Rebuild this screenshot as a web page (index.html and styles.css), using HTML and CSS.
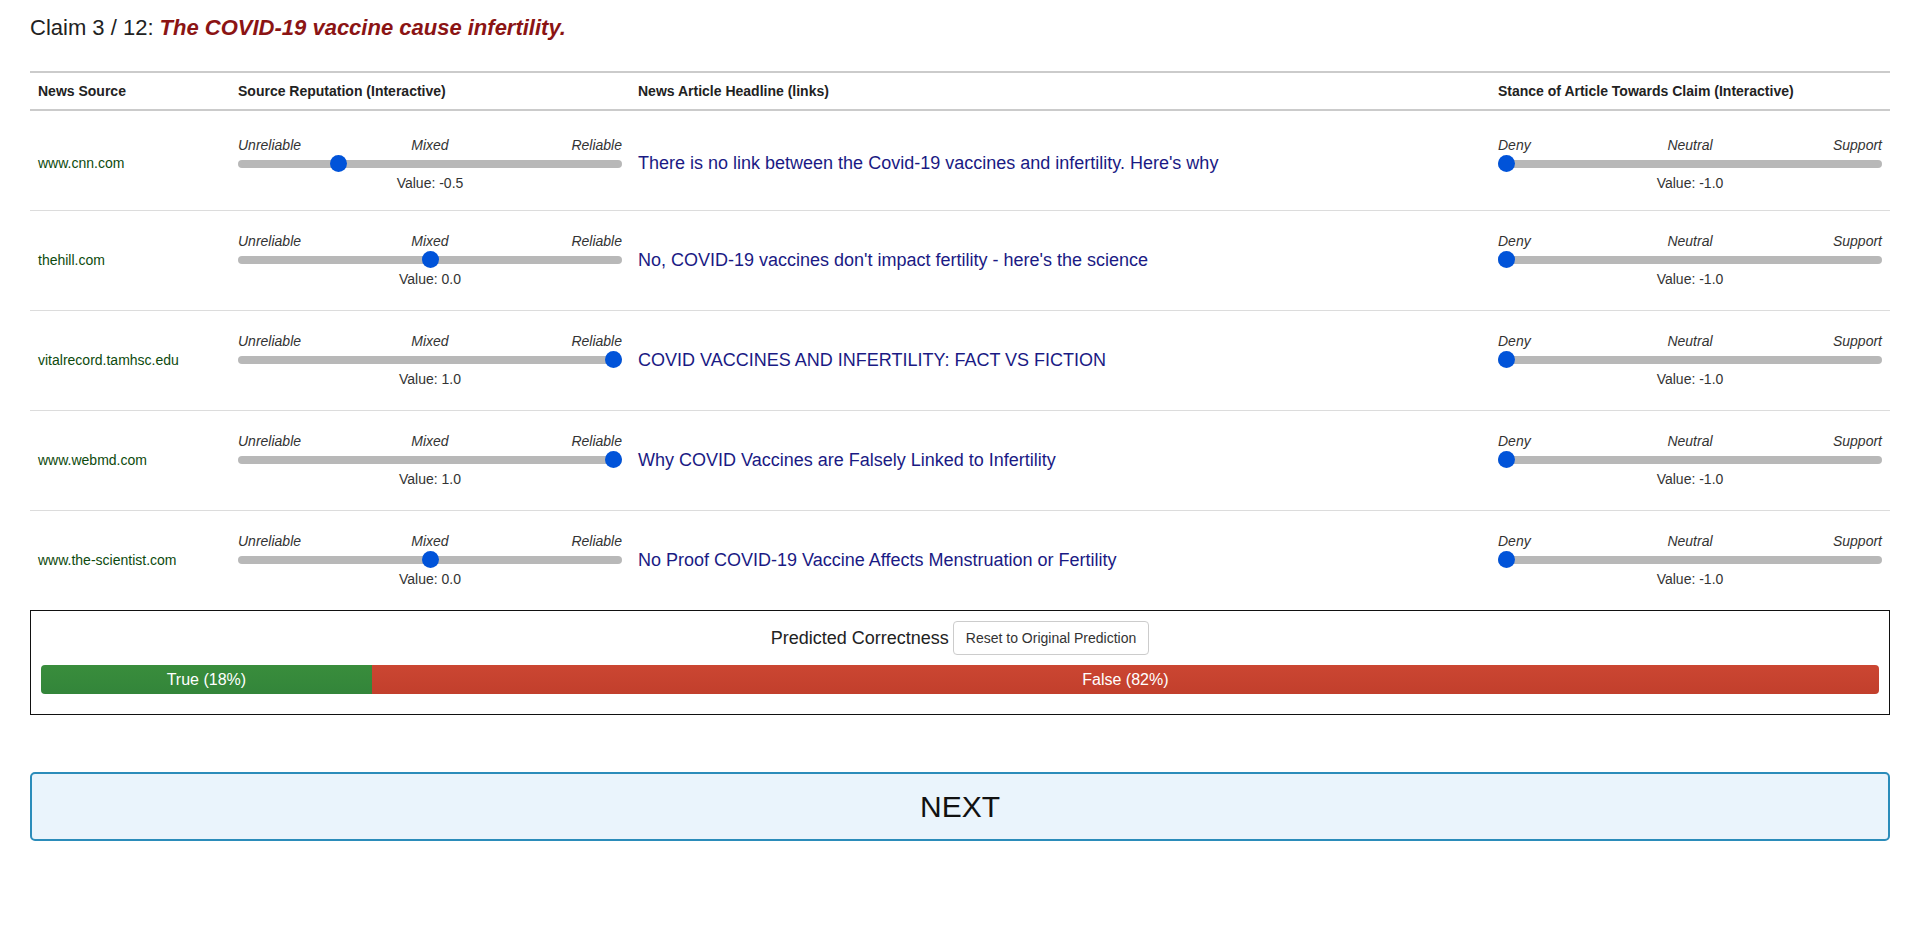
FILE: index.html
```html
<!DOCTYPE html>
<html lang="en">
<head>
<meta charset="utf-8">
<title>Claim 3 / 12</title>
<link rel="stylesheet" href="styles.css">
</head>
<body>
<div class="page">
  <div class="claim">Claim 3 / 12: <span class="claim-text">The COVID-19 vaccine cause infertility.</span></div>

  <table class="sources">
    <colgroup>
      <col class="c-source">
      <col class="c-rep">
      <col>
      <col class="c-stance">
    </colgroup>
    <thead>
      <tr>
        <th>News Source</th>
        <th>Source Reputation (Interactive)</th>
        <th>News Article Headline (links)</th>
        <th>Stance of Article Towards Claim (Interactive)</th>
      </tr>
    </thead>
    <tbody>
      <tr>
        <td class="src">www.cnn.com</td>
        <td class="slider-cell">
          <div class="scale"><span>Unreliable</span><span>Mixed</span><span>Reliable</span></div>
          <input class="range" type="range" min="-1" max="1" step="0.1" value="-0.5">
          <div class="value">Value: -0.5</div>
        </td>
        <td class="headline"><a href="#">There is no link between the Covid-19 vaccines and infertility. Here's why</a></td>
        <td class="slider-cell">
          <div class="scale"><span>Deny</span><span>Neutral</span><span>Support</span></div>
          <input class="range" type="range" min="-1" max="1" step="0.1" value="-1">
          <div class="value">Value: -1.0</div>
        </td>
      </tr>
      <tr>
        <td class="src">thehill.com</td>
        <td class="slider-cell">
          <div class="scale"><span>Unreliable</span><span>Mixed</span><span>Reliable</span></div>
          <input class="range" type="range" min="-1" max="1" step="0.1" value="0">
          <div class="value">Value: 0.0</div>
        </td>
        <td class="headline"><a href="#">No, COVID-19 vaccines don't impact fertility - here's the science</a></td>
        <td class="slider-cell">
          <div class="scale"><span>Deny</span><span>Neutral</span><span>Support</span></div>
          <input class="range" type="range" min="-1" max="1" step="0.1" value="-1">
          <div class="value">Value: -1.0</div>
        </td>
      </tr>
      <tr>
        <td class="src">vitalrecord.tamhsc.edu</td>
        <td class="slider-cell">
          <div class="scale"><span>Unreliable</span><span>Mixed</span><span>Reliable</span></div>
          <input class="range" type="range" min="-1" max="1" step="0.1" value="1">
          <div class="value">Value: 1.0</div>
        </td>
        <td class="headline"><a href="#">COVID VACCINES AND INFERTILITY: FACT VS FICTION</a></td>
        <td class="slider-cell">
          <div class="scale"><span>Deny</span><span>Neutral</span><span>Support</span></div>
          <input class="range" type="range" min="-1" max="1" step="0.1" value="-1">
          <div class="value">Value: -1.0</div>
        </td>
      </tr>
      <tr>
        <td class="src">www.webmd.com</td>
        <td class="slider-cell">
          <div class="scale"><span>Unreliable</span><span>Mixed</span><span>Reliable</span></div>
          <input class="range" type="range" min="-1" max="1" step="0.1" value="1">
          <div class="value">Value: 1.0</div>
        </td>
        <td class="headline"><a href="#">Why COVID Vaccines are Falsely Linked to Infertility</a></td>
        <td class="slider-cell">
          <div class="scale"><span>Deny</span><span>Neutral</span><span>Support</span></div>
          <input class="range" type="range" min="-1" max="1" step="0.1" value="-1">
          <div class="value">Value: -1.0</div>
        </td>
      </tr>
      <tr>
        <td class="src">www.the-scientist.com</td>
        <td class="slider-cell">
          <div class="scale"><span>Unreliable</span><span>Mixed</span><span>Reliable</span></div>
          <input class="range" type="range" min="-1" max="1" step="0.1" value="0">
          <div class="value">Value: 0.0</div>
        </td>
        <td class="headline"><a href="#">No Proof COVID-19 Vaccine Affects Menstruation or Fertility</a></td>
        <td class="slider-cell">
          <div class="scale"><span>Deny</span><span>Neutral</span><span>Support</span></div>
          <input class="range" type="range" min="-1" max="1" step="0.1" value="-1">
          <div class="value">Value: -1.0</div>
        </td>
      </tr>
    </tbody>
  </table>

  <div class="prediction">
    <div class="pred-head">
      <span class="pred-title">Predicted Correctness</span>
      <button class="btn-reset" type="button">Reset to Original Prediction</button>
    </div>
    <div class="progress">
      <div class="bar bar-true" style="width: 18%">True (18%)</div>
      <div class="bar bar-false" style="width: 82%">False (82%)</div>
    </div>
  </div>

  <button class="next" type="button">NEXT</button>
</div>
</body>
</html>
```

FILE: styles.css
```css
html, body {
  margin: 0;
  padding: 0;
  background: #fff;
}

body {
  font-family: "Liberation Sans", Arial, Helvetica, sans-serif;
  font-size: 14px;
  line-height: 20px;
  color: #333;
}

.page {
  padding: 0 30px;
}

.claim {
  font-size: 22px;
  line-height: 26px;
  color: #222;
  margin: 15px 0 30px;
}

.claim-text {
  color: #8b1414;
  font-weight: bold;
  font-style: italic;
}

.sources {
  width: 100%;
  table-layout: fixed;
  border-collapse: separate;
  border-spacing: 0;
  border-top: 2px solid #cbcbcb;
}

.c-source { width: 200px; }
.c-rep { width: 400px; }
.c-stance { width: 400px; }

.sources th {
  text-align: left;
  font-weight: bold;
  color: #222;
  padding: 8px;
  line-height: 20px;
  border-bottom: 2px solid #cbcbcb;
}

.sources td {
  padding: 0 8px;
  vertical-align: top;
  height: 99px;
  box-sizing: border-box;
}

.sources tbody tr + tr td {
  border-top: 1px solid #dcdcdc;
  height: 100px;
}

.src {
  color: #0d4a0d;
}

.headline a {
  font-size: 18px;
  line-height: 20px;
  color: #1a1a84;
  text-decoration: none;
}

.sources td.src,
.sources td.headline {
  padding-top: 42px;
}

.sources tbody tr + tr td.src,
.sources tbody tr + tr td.headline {
  padding-top: 39px;
}

.sources td.slider-cell {
  padding-top: 24px;
}

.sources tbody tr + tr td.slider-cell {
  padding-top: 20px;
}

.scale {
  display: grid;
  grid-template-columns: 1fr auto 1fr;
  font-style: italic;
  color: #333;
  line-height: 20px;
}

.scale span:last-child {
  text-align: right;
}

.range {
  -webkit-appearance: none;
  appearance: none;
  display: block;
  width: 100%;
  height: 17px;
  margin: 0 0 1px;
  padding: 0;
  background: transparent;
}

.range::-webkit-slider-runnable-track {
  height: 8px;
  background: #b8b8b8;
  border-radius: 4px;
  border: none;
}

.range::-webkit-slider-thumb {
  -webkit-appearance: none;
  appearance: none;
  width: 17px;
  height: 17px;
  border-radius: 50%;
  background: #0053d9;
  border: none;
  margin-top: -4.5px;
}

.value {
  text-align: center;
  color: #333;
  line-height: 20px;
}

.prediction {
  border: 1px solid #111;
  padding: 10px 10px 20px;
}

.pred-head {
  display: flex;
  justify-content: center;
  align-items: center;
  gap: 4px;
}

.pred-title {
  font-size: 18px;
  color: #222;
}

.btn-reset {
  font-family: inherit;
  font-size: 14px;
  line-height: 20px;
  color: #333;
  background: #fff;
  border: 1px solid #ccc;
  border-radius: 4px;
  padding: 6px 12px;
  margin: 0;
}

.progress {
  display: flex;
  height: 29px;
  margin-top: 10px;
  border-radius: 4px;
  overflow: hidden;
  background: #f5f5f5;
}

.bar {
  display: flex;
  align-items: center;
  justify-content: center;
  color: #fff;
  font-size: 16px;
  height: 100%;
}

.bar-true {
  background: linear-gradient(to bottom, #398d3c, #33853a);
}

.bar-false {
  background: linear-gradient(to bottom, #cb4632, #c23f2c);
}

.next {
  display: block;
  width: 100%;
  height: 69px;
  margin-top: 57px;
  font-family: inherit;
  font-size: 30px;
  color: #111;
  background: #eaf4fc;
  border: 2px solid #2b8cba;
  border-radius: 5px;
  padding: 0;
}
```
